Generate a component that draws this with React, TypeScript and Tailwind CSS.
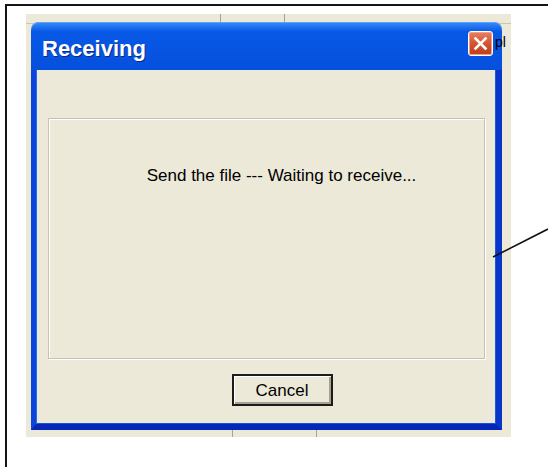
import React from "react";

// XP-style "Receiving" progress dialog sitting on top of a table view, with a callout line
const CloseButton: React.FC = () => (
    <div className="w-[25px] h-[25px] rounded-[3px] border border-white bg-gradient-to-b from-[#e8805f] via-[#d6532f] to-[#c03c1c] flex items-center justify-center shadow-[inset_0_0_0_1px_#f2a083]">
        <svg width="15" height="15" viewBox="0 0 15 15">
            <path d="M2.5 2.5 L12.5 12.5 M12.5 2.5 L2.5 12.5" stroke="#fff" strokeWidth="2.6" strokeLinecap="square" />
        </svg>
    </div>
);

const App: React.FC = () => {
    return (
        <div className="w-[548px] h-[467px] bg-white overflow-hidden relative pl-[5px] pt-[4px] font-['Liberation_Sans',Arial,sans-serif]">
            {/* picture frame */}
            <div className="h-full border-l-[2px] border-t-[2px] border-[#151515] pl-[19px] pt-[8px]">
                {/* app window behind the dialog */}
                <div className="w-[485px] h-[423px] bg-[#ece9d8] relative pl-[5px] pt-[8px]">
                    <div className="absolute left-0 right-0 top-[9px] h-px bg-[#c9c6b6]" />
                    <div className="absolute top-0 h-[8px] left-[194px] w-px bg-[#a7a493]" />
                    <div className="absolute top-0 h-[8px] left-[258px] w-px bg-[#a7a493]" />
                    <div className="absolute bottom-0 h-[8px] left-[206px] w-px bg-[#a7a493]" />
                    <div className="absolute bottom-0 h-[8px] left-[290px] w-px bg-[#a7a493]" />

                    {/* dialog */}
                    <div className="relative w-[471px] h-[408px] flex flex-col">
                        <div className="h-[48px] rounded-t-[8px] bg-gradient-to-b from-[#3a8cf8] via-[#0858e6] via-20% to-[#0550dc] flex items-start justify-between pl-[11px] pr-[9px] shadow-[inset_0_1px_0_#5aa2ff]">
                            <span className="text-white font-bold text-[22px] leading-none pt-[16px] [text-shadow:1px_1px_0_#0a2a8a]">
                                Receiving
                            </span>
                            <div className="mt-[9px]">
                                <CloseButton />
                            </div>
                        </div>
                        <div className="flex-1 flex flex-col bg-[#ece9d8] border-l-[5px] border-r-[6px] border-b-[6px] border-l-[#0a46dc] border-r-[#0736c8] border-b-[#0628b8] shadow-[inset_1px_0_0_#2a6cf0,inset_-1px_0_0_#1858e4,inset_0_-1px_0_#1a52de]">
                            <div className="mt-[48px] ml-[12px] mr-[11px] h-[241px] border border-[#c5c2b2] shadow-[inset_1px_1px_0_#fff,1px_1px_0_#fff] flex justify-center pl-[30px] pt-[46px]">
                                <span className="text-[17px] leading-[22px] text-black h-fit">
                                    Send the file --- Waiting to receive...
                                </span>
                            </div>
                            <div className="flex justify-center pl-[32px] mt-[15px]">
                                <button
                                    type="button"
                                    className="w-[101px] h-[32px] bg-[#ece9d8] border-[2px] border-[#1c1c1c] shadow-[inset_1px_1px_0_#fff,inset_-2px_-2px_0_#a5a28f] text-[17px] text-black leading-none"
                                >
                                    Cancel
                                </button>
                            </div>
                        </div>
                    </div>

                    {/* stray column header text bleeding past the dialog edge */}
                    <span className="absolute z-10 left-[469px] top-[21px] text-[14px] leading-none text-black">pl</span>
                </div>
            </div>

            {/* callout pointer */}
            <svg className="absolute left-0 top-0" width="548" height="467" viewBox="0 0 548 467">
                <line x1="493" y1="257" x2="548" y2="229" stroke="#111" strokeWidth="1.6" />
            </svg>
        </div>
    );
};

export default App;
